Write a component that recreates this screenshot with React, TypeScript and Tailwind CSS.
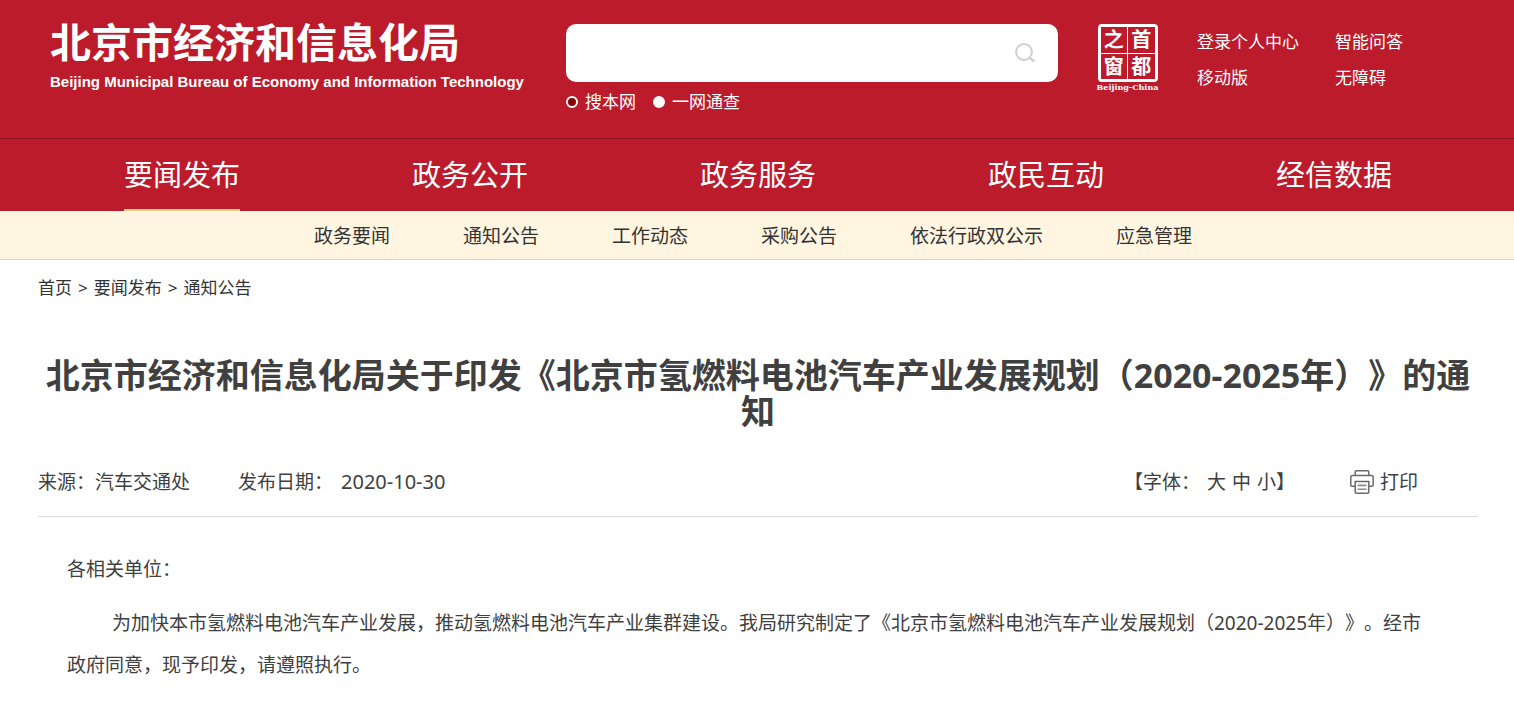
import { useState } from "react";

const navItems = ["要闻发布", "政务公开", "政务服务", "政民互动", "经信数据"];
const subItems = ["政务要闻", "通知公告", "工作动态", "采购公告", "依法行政双公示", "应急管理"];
const userLinks = ["登录个人中心", "智能问答", "移动版", "无障碍"];
const searchScopes = ["搜本网", "一网通查"];

function SearchIcon() {
  return (
    <svg viewBox="0 0 20 20" className="h-5 w-5" fill="none" stroke="#cfcfcf" strokeWidth="2" aria-hidden="true">
      <circle cx="9" cy="9" r="7.9" />
      <path d="M14.8 14.8 L19.2 18.6" strokeWidth="2.4" />
    </svg>
  );
}

function PrinterIcon() {
  return (
    <svg viewBox="0 0 24 24" className="h-6 w-6" fill="none" stroke="#6a6a6a" strokeWidth="1.5" aria-hidden="true">
      <path d="M5.2 5.4 V1.9 Q5.2 0.8 6.3 0.8 H17.7 Q18.8 0.8 18.8 1.9 V5.4" />
      <path d="M5 16.3 H2 Q0.8 16.3 0.8 15 V7.2 Q0.8 5.4 2.5 5.4 H21.5 Q23.2 5.4 23.2 7.2 V15 Q23.2 16.3 22 16.3 H19" />
      <path d="M5.2 11.6 H18.8 V22.1 Q18.8 23.2 17.7 23.2 H6.3 Q5.2 23.2 5.2 22.1 Z" />
      <path d="M7.5 15.4 H16.5 M7.5 19.2 H16.5" stroke="#8c8c8c" strokeWidth="1.6" />
    </svg>
  );
}

function CapitalWindowSeal() {
  return (
    <a href="#" className="flex w-[65px] shrink-0 flex-col items-center text-white">
      <span className="grid h-[58px] w-[60px] grid-cols-2 grid-rows-2 gap-px rounded-sm border-3 border-white bg-white text-[20px] leading-[25px] font-bold">
        {["之", "首", "窗", "都"].map((c) => (
          <span key={c} className="bg-[#bc1b2c] text-center">
            {c}
          </span>
        ))}
      </span>
      <span className="font-['DejaVu_Serif',serif] text-[8px] leading-[10px] font-bold">Beijing-China</span>
    </a>
  );
}

function Header() {
  const [scope, setScope] = useState(searchScopes[0]);
  return (
    <header className="flex h-[139px] items-start border-b border-[#8e1320] bg-[#bc1b2c] pt-6 pr-9 pl-[50px] text-white">
      <a href="#" className="w-[516px] shrink-0 whitespace-nowrap">
        <span className="block text-[41px] leading-9 font-bold">北京市经济和信息化局</span>
        <span className="mt-3 block font-['Liberation_Sans',sans-serif] text-[15px] leading-5 font-bold">
          Beijing Municipal Bureau of Economy and Information Technology
        </span>
      </a>
      <form className="max-w-[492px] min-w-0 flex-1" onSubmit={(e) => e.preventDefault()}>
        <div className="flex h-[58px] items-center rounded-[10px] bg-white pr-[23px] pl-4">
          <input type="text" aria-label="搜索" className="h-full min-w-0 flex-1 bg-transparent text-[17px] text-[#333] outline-none" />
          <button type="submit" aria-label="搜索">
            <SearchIcon />
          </button>
        </div>
        <div className="mt-2 flex gap-[17px] text-[17px] leading-6">
          {searchScopes.map((s) => (
            <label key={s} className="flex items-center gap-[7px]">
              <input
                type="radio"
                name="scope"
                checked={scope === s}
                onChange={() => setScope(s)}
                className="h-3 w-3 appearance-none rounded-full border-2 border-white bg-white checked:bg-[#8b0000]"
              />
              {s}
            </label>
          ))}
        </div>
      </form>
      <div className="ml-[37px] shrink-0">
        <CapitalWindowSeal />
      </div>
      <div className="mt-[6px] ml-[37px] grid shrink-0 grid-cols-[102px_auto] gap-x-9 gap-y-3 text-[17px] leading-6 whitespace-nowrap">
        {userLinks.map((l) => (
          <a key={l} href="#" className="hover:underline">
            {l}
          </a>
        ))}
      </div>
    </header>
  );
}

export default function App() {
  return (
    <div
      className="bg-white font-['Noto_Sans','Noto_Sans_CJK_SC',sans-serif] text-[#404040] [text-spacing-trim:space-all]"
      lang="zh-CN"
    >
      <Header />
      <nav aria-label="主导航" className="grid grid-cols-5 bg-[#bc1b2c] pr-9 pl-[38px] text-white">
        {navItems.map((n, i) => (
          <div key={n} className="flex justify-center">
            <a
              href="#"
              className={
                i === 0
                  ? "h-[72px] border-b-2 border-[#fccd80] text-[29px] leading-[72px]"
                  : "h-[72px] text-[29px] leading-[72px]"
              }
            >
              {n}
            </a>
          </div>
        ))}
      </nav>
      <nav
        aria-label="栏目导航"
        className="flex justify-center gap-[73px] border-b border-[#fccd80] bg-[#fff5e1] pt-[2px] pr-2 text-[19px] leading-[46px] whitespace-nowrap text-[#333]"
      >
        {subItems.map((n) => (
          <a key={n} href="#">
            {n}
          </a>
        ))}
      </nav>
      <main className="pr-9 pl-[38px]">
        <div className="flex gap-[6px] pt-4 text-[17px] leading-6 text-[#333]">
          <a href="#">首页</a>
          <span>&gt;</span>
          <a href="#">要闻发布</a>
          <span>&gt;</span>
          <a href="#">通知公告</a>
        </div>
        <h1 className="mt-[57px] text-center text-[34px] leading-9 font-bold">
          北京市经济和信息化局关于印发《北京市氢燃料电池汽车产业发展规划（2020-2025年）》的通知
        </h1>
        <div className="mt-[39px] flex items-center border-b border-[#dcdcdc] pr-[60px] pb-5 text-[19px] leading-7">
          <span>来源：汽车交通处</span>
          <span className="ml-12 flex gap-2">
            发布日期：<span className="text-[20px]">2020-10-30</span>
          </span>
          <span className="ml-auto flex">
            【字体：
            <span className="ml-[7px] flex gap-[6px]">
              <button type="button">大</button>
              <button type="button">中</button>
              <button type="button">小</button>
            </span>
            】
          </span>
          <button type="button" className="ml-[55px] flex items-center gap-[6px]">
            <PrinterIcon />
            打印
          </button>
        </div>
        <article className="pt-[31px] pr-12 pl-[29px] text-[19px] leading-[42px]">
          <p>各相关单位：</p>
          <p className="mt-3 indent-[45px]">
            为加快本市氢燃料电池汽车产业发展，推动氢燃料电池汽车产业集群建设。我局研究制定了《北京市氢燃料电池汽车产业发展规划（2020-2025年）》。经市政府同意，现予印发，请遵照执行。
          </p>
        </article>
      </main>
    </div>
  );
}
